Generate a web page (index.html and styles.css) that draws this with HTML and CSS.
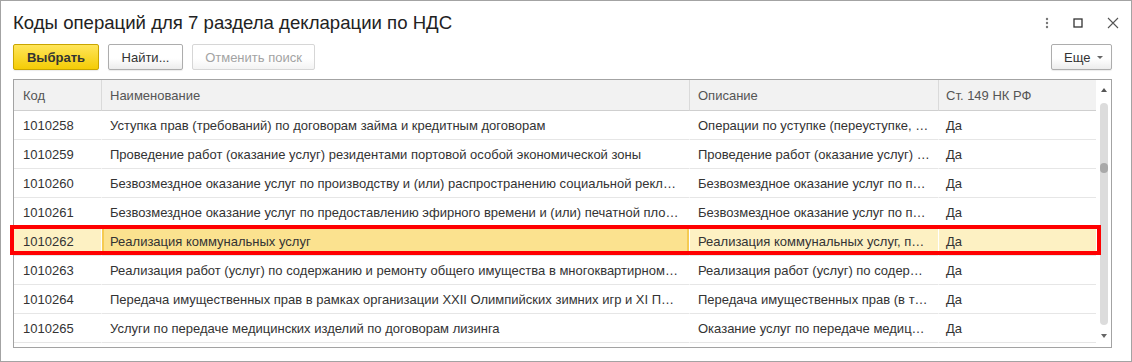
FILE: index.html
```html
<!DOCTYPE html>
<html lang="ru">
<head>
  <meta charset="UTF-8" />
  <title>Коды операций для 7 раздела декларации по НДС</title>
  <link rel="stylesheet" href="styles.css">
</head>
<body>
  <div class="window">
    <div class="titlebar">
      <h1>Коды операций для 7 раздела декларации по НДС</h1>
      <div class="win-icons">
        <svg width="4" height="12" viewBox="0 0 4 12"><circle cx="2" cy="2" r="1.2" fill="#777"/><circle cx="2" cy="6" r="1.2" fill="#777"/><circle cx="2" cy="10" r="1.2" fill="#777"/></svg>
        <svg width="10" height="10" viewBox="0 0 10 10"><rect x="1" y="1" width="8" height="8" fill="none" stroke="#333" stroke-width="1.3"/></svg>
        <svg width="12" height="12" viewBox="0 0 12 12"><path d="M1 1L11 11M11 1L1 11" stroke="#555" stroke-width="1.1"/></svg>
      </div>
    </div>

    <div class="toolbar">
      <button class="btn btn-default">Выбрать</button>
      <button class="btn btn-find">Найти...</button>
      <button class="btn btn-cancel" disabled>Отменить поиск</button>
      <button class="btn btn-more">Еще <span class="caret"></span></button>
    </div>

    <div class="grid">
      <table>
        <colgroup>
          <col style="width:87px">
          <col style="width:588px">
          <col style="width:249px">
          <col>
        </colgroup>
        <thead>
          <tr>
            <th>Код</th>
            <th>Наименование</th>
            <th>Описание</th>
            <th>Ст. 149 НК РФ</th>
          </tr>
        </thead>
        <tbody>
          <tr>
            <td>1010258</td>
            <td>Уступка прав (требований) по договорам займа и кредитным договорам</td>
            <td>Операции по уступке (переуступке, переходу) прав требования</td>
            <td>Да</td>
          </tr>
          <tr>
            <td>1010259</td>
            <td>Проведение работ (оказание услуг) резидентами портовой особой экономической зоны</td>
            <td>Проведение работ (оказание услуг) резидентами портовой особой экономической зоны</td>
            <td>Да</td>
          </tr>
          <tr>
            <td>1010260</td>
            <td>Безвозмездное оказание услуг по производству и (или) распространению социальной рекламы</td>
            <td>Безвозмездное оказание услуг по производству социальной рекламы</td>
            <td>Да</td>
          </tr>
          <tr>
            <td>1010261</td>
            <td>Безвозмездное оказание услуг по предоставлению эфирного времени и (или) печатной площади</td>
            <td>Безвозмездное оказание услуг по предоставлению эфирного времени</td>
            <td>Да</td>
          </tr>
          <tr class="selected">
            <td>1010262</td>
            <td class="current">Реализация коммунальных услуг</td>
            <td>Реализация коммунальных услуг, предоставляемых управляющими организациями</td>
            <td>Да</td>
          </tr>
          <tr>
            <td>1010263</td>
            <td>Реализация работ (услуг) по содержанию и ремонту общего имущества в многоквартирном доме</td>
            <td>Реализация работ (услуг) по содержанию и ремонту общего имущества</td>
            <td>Да</td>
          </tr>
          <tr>
            <td>1010264</td>
            <td>Передача имущественных прав в рамках организации XXII Олимпийских зимних игр и XI Паралимпийских зимних игр</td>
            <td>Передача имущественных прав (в том числе исключительных)</td>
            <td>Да</td>
          </tr>
          <tr>
            <td>1010265</td>
            <td>Услуги по передаче медицинских изделий по договорам лизинга</td>
            <td>Оказание услуг по передаче медицинских изделий по договорам лизинга</td>
            <td>Да</td>
          </tr>
        </tbody>
      </table>
      <div class="scrollbar">
        <span class="arrow-up"></span>
        <div class="track"><div class="thumb"></div></div>
        <span class="arrow-down"></span>
      </div>
    </div>

    <!-- red highlight around the chosen row -->
    <div class="highlight"></div>
  </div>
</body>
</html>
```

FILE: styles.css
```css
* {
  box-sizing: border-box;
}
body {
  margin: 0;
  font-family: "Liberation Sans", Arial, sans-serif;
  font-size: 13px;
  color: #333;
  background: #fff;
}
.window {
  position: relative;
  height: 362px;
  border: 1px solid #a3a3a3;
  padding: 0 19px 0 12px;
  display: flex;
  flex-direction: column;
}
.titlebar {
  height: 43px;
  display: flex;
  align-items: center;
  justify-content: space-between;
  margin-right: -7px;
}
h1 {
  margin: 0;
  font-size: 18.6px;
  font-weight: normal;
  color: #222;
  padding-top: 1px;
}
.win-icons {
  display: flex;
  align-items: center;
  gap: 24px;
  padding-top: 1px;
}
.toolbar {
  display: flex;
  gap: 9px;
  height: 26px;
}
.btn {
  font-family: inherit;
  font-size: 13px;
  color: #333;
  height: 26px;
  padding: 0;
  border: 1px solid #adadad;
  border-radius: 2px;
  background: linear-gradient(#fff 55%, #ececec);
  box-shadow: 0 1px 1px rgba(0, 0, 0, 0.08);
}
.btn:disabled {
  color: #a3a3a3;
  border-color: #d6d6d6;
  background: linear-gradient(#fff 55%, #f3f3f3);
  box-shadow: none;
}
.btn-default {
  width: 86px;
  font-weight: bold;
  border-color: #c9a500;
  background: linear-gradient(#ffe55a, #f4cc06);
}
.btn-find {
  width: 75px;
}
.btn-cancel {
  width: 123px;
}
.btn-more {
  margin-left: auto;
  width: 61px;
  padding: 0 6px 0 12px;
  display: flex;
  align-items: center;
  gap: 7px;
}
.caret {
  width: 0;
  height: 0;
  border-left: 3px solid transparent;
  border-right: 3px solid transparent;
  border-top: 3px solid #666;
  margin-top: 1px;
}
.grid {
  margin-top: 9px;
  height: 269px;
  border: 1px solid #a3a3a3;
  display: flex;
}
table {
  width: 1082px;
  table-layout: fixed;
  border-collapse: separate;
  border-spacing: 0;
  align-self: flex-start;
}
th {
  height: 31px;
  background: #f2f2f2;
  color: #555;
  font-weight: normal;
  text-align: left;
  padding: 0 8px 0 9px;
  border-bottom: 1px solid #cfcfcf;
}
th + th {
  border-left: 1px solid #dadada;
  padding-left: 8px;
}
th:last-child {
  padding-left: 7px;
}
td {
  height: 29px;
  padding: 0 8px 0 9px;
  border-bottom: 1px solid #e6e6e6;
  white-space: nowrap;
  overflow: hidden;
  text-overflow: ellipsis;
  background-clip: padding-box;
}
td + td {
  border-left: 1px solid #fff;
  padding-left: 8px;
}
td:last-child {
  padding-left: 7px;
}
tr.selected td {
  background-color: #fdf1c3;
}
tr.selected td.current {
  background-color: #fbe28f;
  box-shadow: inset 0 0 0 2px #f5cb52;
}
.scrollbar {
  width: 15px;
  display: flex;
  flex-direction: column;
  align-items: center;
  padding-top: 8px;
}
.arrow-up,
.arrow-down {
  width: 0;
  height: 0;
  border-left: 3px solid transparent;
  border-right: 3px solid transparent;
}
.arrow-up {
  border-bottom: 4px solid #555;
}
.arrow-down {
  border-top: 4px solid #666;
  margin-top: 9px;
}
.track {
  margin-top: 11px;
  width: 8px;
  height: 222px;
  background: #dcdcdc;
  border-radius: 4px;
  padding-top: 60px;
}
.thumb {
  height: 10px;
  background: #a9a9a9;
  border-radius: 4px;
}
.highlight {
  position: absolute;
  left: 9px;
  top: 224px;
  width: 1091px;
  height: 30px;
  border: 4px solid #f00;
  pointer-events: none;
}
```
